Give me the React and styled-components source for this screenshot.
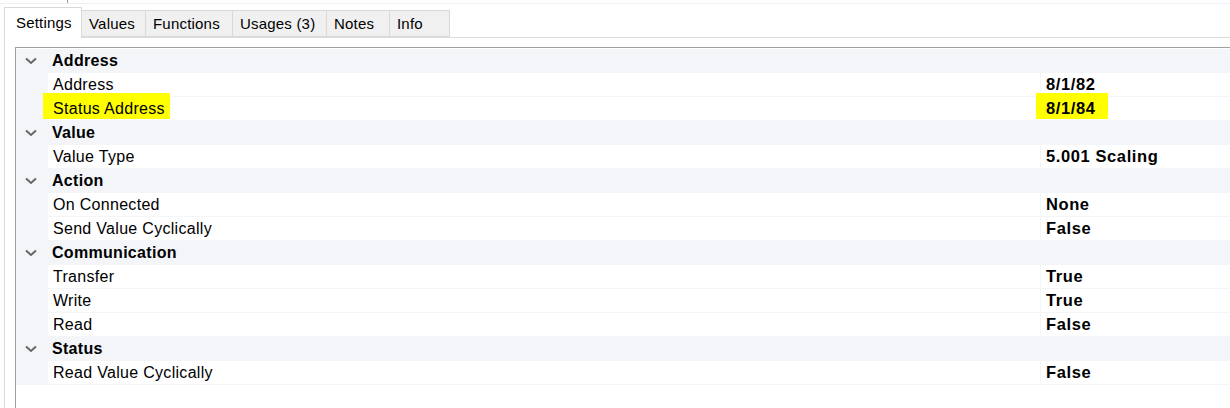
import React from 'react'
import styled, { createGlobalStyle } from 'styled-components'

const GlobalStyle = createGlobalStyle`
  html, body {
    margin: 0;
    padding: 0;
    background: #ffffff;
    font-family: "Liberation Sans", Arial, sans-serif;
    color: #000;
  }
`

const MARGIN = '#f3f5f9'

const Page = styled.div`
  width: 1230px;
  height: 408px;
  overflow: hidden;
  display: flex;
  flex-direction: column;
  background: #fff;
`

const TopStrip = styled.div`
  height: 3px;
  border-bottom: 1px solid #eef1f6;
  position: relative;
  flex: none;

  &::after {
    content: '';
    position: absolute;
    left: 67px;
    top: 0;
    width: 1px;
    height: 3px;
    background: #9a9a9a;
  }
`

const TabBar = styled.div`
  display: flex;
  align-items: flex-end;
  height: 33px;
  padding-left: 4px;
  flex: none;
  position: relative;
  z-index: 1;
`

const Tab = styled.div`
  box-sizing: border-box;
  width: ${p => p.w}px;
  height: ${p => (p.active ? 31 : 27)}px;
  margin-bottom: ${p => (p.active ? -1 : 0)}px;
  padding-left: ${p => (p.active ? 11 : 7)}px;
  background: ${p => (p.active ? '#ffffff' : '#f0f0f0')};
  border: 1px solid #d9d9d9;
  border-bottom: ${p => (p.active ? 'none' : '1px solid #d9d9d9')};
  border-left: ${p => (p.first || p.active ? '1px solid #d9d9d9' : 'none')};
  font-size: 15px;
  letter-spacing: 0.2px;
  line-height: ${p => (p.active ? 29 : 25)}px;
  white-space: nowrap;
`

const Panel = styled.div`
  flex: 1;
  margin-left: 4px;
  border-top: 1px solid #dcdcdc;
  border-left: 1px solid #dcdcdc;
  padding: 9px 0 0 10px;
`

const Grid = styled.div`
  border-top: 1px solid #a0a0a0;
  border-left: 1px solid #a0a0a0;
  height: 100%;
  padding-top: 1px;
  box-sizing: border-box;
  font-size: 16px;
  letter-spacing: 0.3px;
`

const CategoryRow = styled.div`
  display: flex;
  align-items: center;
  height: 24px;
  background: ${MARGIN};
  font-weight: bold;
`

const Chevron = styled.svg`
  width: 12px;
  height: 8px;
  margin: 0 15px 0 9px;
  flex: none;
`

const PropRow = styled.div`
  display: flex;
  height: 24px;
  background: ${MARGIN};
`

const Gutter = styled.div`
  width: 32px;
  flex: none;
`

const LabelCell = styled.div`
  flex: 1;
  height: 23px;
  line-height: 23px;
  padding-left: 5px;
  background: #fff;
  white-space: nowrap;
`

const ValueCell = styled.div`
  width: 184px;
  flex: none;
  height: 23px;
  line-height: 23px;
  margin-left: 1px;
  padding-left: 5px;
  background: #fff;
  font-weight: bold;
  font-size: 16.5px;
  letter-spacing: 0.6px;
  white-space: nowrap;
`

const Mark = styled.span`
  display: inline-block;
  vertical-align: top;
  background: #ffff00;
  line-height: 23px;
  margin: -4px 0 0 -10px;
  padding: 4px ${p => p.right}px 0 10px;
  height: 22px;
`

const tabs = [
  { name: 'Settings', w: 78, active: true },
  { name: 'Values', w: 64 },
  { name: 'Functions', w: 87 },
  { name: 'Usages (3)', w: 94 },
  { name: 'Notes', w: 63 },
  { name: 'Info', w: 60 },
]

const groups = [
  {
    title: 'Address',
    items: [
      { label: 'Address', value: '8/1/82' },
      { label: 'Status Address', value: '8/1/84', marked: true },
    ],
  },
  { title: 'Value', items: [{ label: 'Value Type', value: '5.001 Scaling' }] },
  {
    title: 'Action',
    items: [
      { label: 'On Connected', value: 'None' },
      { label: 'Send Value Cyclically', value: 'False' },
    ],
  },
  {
    title: 'Communication',
    items: [
      { label: 'Transfer', value: 'True' },
      { label: 'Write', value: 'True' },
      { label: 'Read', value: 'False' },
    ],
  },
  { title: 'Status', items: [{ label: 'Read Value Cyclically', value: 'False' }] },
]

const ChevronIcon = () => (
  <Chevron viewBox="0 0 12 8">
    <polyline points="1,1.5 6,6 11,1.5" fill="none" stroke="#666666" strokeWidth="2" />
  </Chevron>
)

export default function App() {
  return (
    <Page>
      <GlobalStyle />
      <TopStrip />
      <TabBar>
        {tabs.map((t, i) => (
          <Tab key={t.name} w={t.w} active={t.active} first={i === 0}>
            {t.name}
          </Tab>
        ))}
      </TabBar>
      <Panel>
        <Grid>
          {groups.map(g => (
            <React.Fragment key={g.title}>
              <CategoryRow>
                <ChevronIcon />
                {g.title}
              </CategoryRow>
              {g.items.map(it => (
                <PropRow key={it.label}>
                  <Gutter />
                  <LabelCell>
                    {it.marked ? <Mark right={5}>{it.label}</Mark> : it.label}
                  </LabelCell>
                  <ValueCell>
                    {it.marked ? <Mark right={13}>{it.value}</Mark> : it.value}
                  </ValueCell>
                </PropRow>
              ))}
            </React.Fragment>
          ))}
        </Grid>
      </Panel>
    </Page>
  )
}
